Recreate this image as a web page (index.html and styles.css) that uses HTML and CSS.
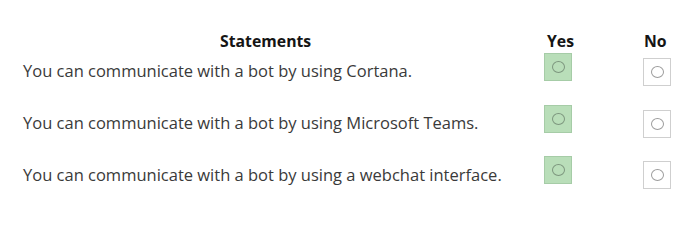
FILE: index.html
```html
<!DOCTYPE html>
<html>
<head>
<meta charset="utf-8">
<link rel="stylesheet" href="styles.css">
</head>
<body>
<div class="table">
  <div class="head stmt-head">Statements</div>
  <div class="head yes-head">Yes</div>
  <div class="head no-head">No</div>

  <div class="stmt">You can communicate with a bot by using Cortana.</div>
  <div class="cell"><span class="box yes"><span class="ring"></span></span></div>
  <div class="cell"><span class="box no"><span class="ring"></span></span></div>

  <div class="stmt">You can communicate with a bot by using Microsoft Teams.</div>
  <div class="cell"><span class="box yes"><span class="ring"></span></span></div>
  <div class="cell"><span class="box no"><span class="ring"></span></span></div>

  <div class="stmt">You can communicate with a bot by using a webchat interface.</div>
  <div class="cell"><span class="box yes"><span class="ring"></span></span></div>
  <div class="cell"><span class="box no"><span class="ring"></span></span></div>
</div>
</body>
</html>
```
FILE: styles.css
```css
html, body {
  margin: 0;
  padding: 0;
  background: #ffffff;
}
body {
  font-family: "Open Sans", "Noto Sans", sans-serif;
}
.table {
  display: grid;
  grid-template-columns: 521px 99px 80px;
  grid-template-rows: 21px repeat(3, 51.75px);
  padding: 25px 0 0 23px;
  width: 700px;
  box-sizing: border-box;
}
.head {
  font-weight: 700;
  font-size: 15.8px;
  color: #151515;
  line-height: 18px;
  margin-top: 7px;
}
.stmt-head {
  padding-left: 197px;
}
.yes-head {
  padding-left: 3px;
}
.no-head {
  padding-left: 1px;
}
.stmt {
  font-size: 16.5px;
  color: #3a3a3a;
  line-height: 20px;
  align-self: center;
  margin-top: -1px;
}
.cell {
  display: flex;
  align-items: center;
}
.box {
  width: 28px;
  height: 28px;
  box-sizing: border-box;
  display: flex;
  align-items: center;
  justify-content: center;
}
.box.yes {
  background: #b9deb9;
  border: 1px solid #a6cca7;
  margin-top: -10px;
}
.box.no {
  background: #ffffff;
  border: 1px solid #cfcfcf;
}
.ring {
  width: 13px;
  height: 12px;
  border-radius: 50%;
  box-sizing: border-box;
}
.yes .ring {
  border: 1.5px solid #7d967e;
}
.no .ring {
  border: 1.5px solid #9c9c9c;
}
```
